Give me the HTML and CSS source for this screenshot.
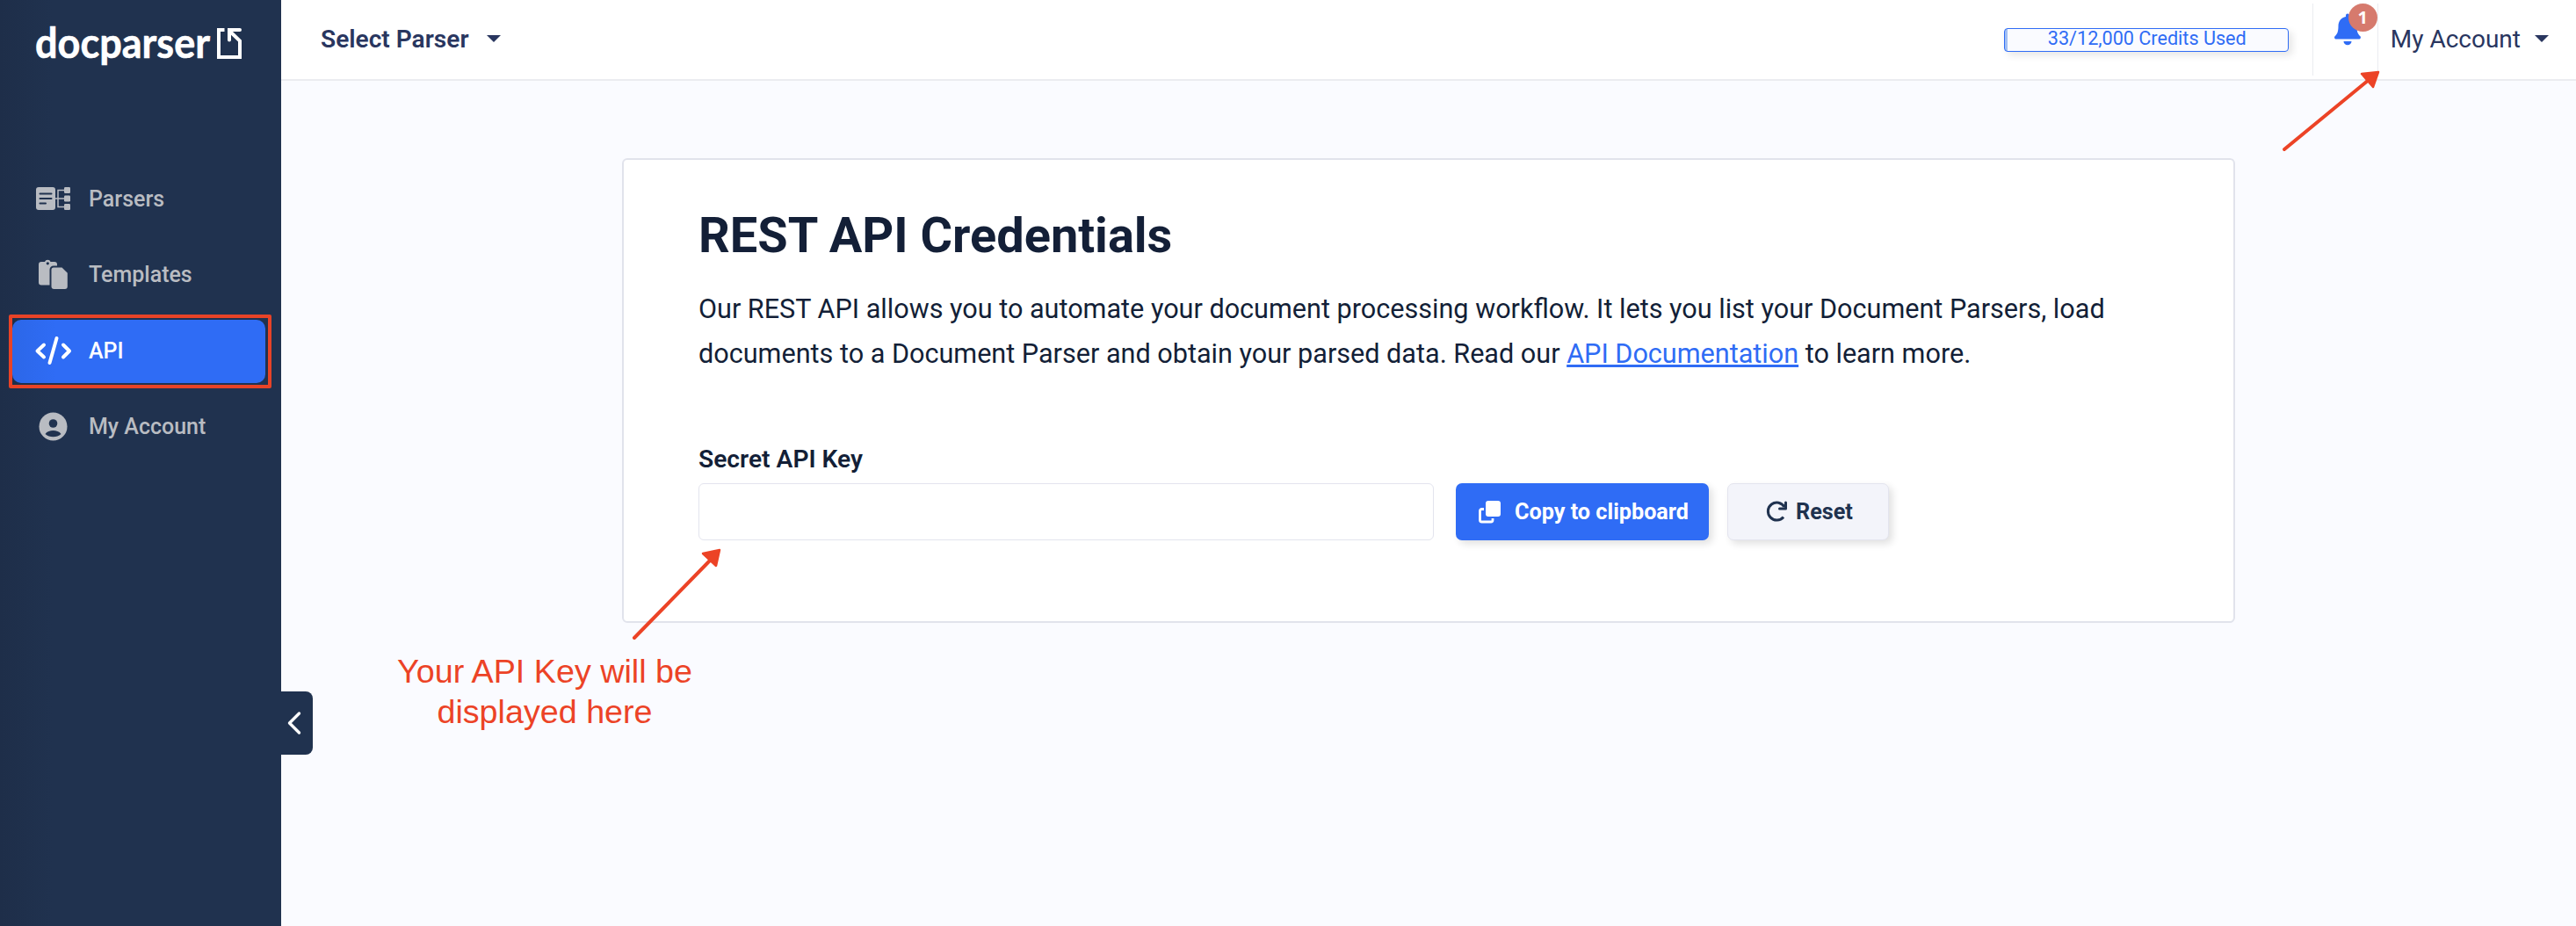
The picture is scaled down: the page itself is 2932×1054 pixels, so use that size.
FILE: index.html
```html
<!DOCTYPE html>
<html lang="en">
<head>
  <meta charset="UTF-8">
  <title>REST API Credentials - Docparser</title>
  <link rel="stylesheet" href="styles.css">
</head>
<body>

<aside class="sidebar">
  <a class="logo" href="#">
    <svg width="240" height="66" viewBox="0 0 240 66">
      <text class="wordmark" x="0" y="45" textLength="199" lengthAdjust="spacingAndGlyphs">docparser</text>
      <path d="M215.500 13H209v31h24V25.500L221 14" fill="none" stroke="#fff" stroke-width="4"/>
      <path d="M233 13h-12v11.500" fill="none" stroke="#fff" stroke-width="4" stroke-linecap="round"/>
    </svg>
  </a>

  <nav class="menu">
    <a class="menu-item" href="#">
      <svg width="40" height="40" viewBox="0 0 40 40">
        <rect x="1" y="6" width="22" height="26" rx="3" fill="currentColor"/>
        <path d="M5.500 13.500h13M5.500 19h13M5.500 24.500h6.500" stroke="#20324f" stroke-width="2" stroke-linecap="round"/>
        <path d="M23 19h11M34 9.500h-8v19h8" fill="none" stroke="currentColor" stroke-width="1.500"/>
        <rect x="33" y="6" width="7" height="7" rx="1.200" fill="currentColor"/>
        <rect x="33" y="15.500" width="7" height="7" rx="1.200" fill="currentColor"/>
        <rect x="33" y="25" width="7" height="7" rx="1.200" fill="currentColor"/>
      </svg>
      <span>Parsers</span>
    </a>
    <a class="menu-item" href="#">
      <svg width="40" height="40" viewBox="0 0 40 40">
        <path d="M7 5h4a3.500 3.500 0 0 1 6.600 0H22a3 3 0 0 1 3 3v1.500h-4a4.500 4.500 0 0 0-4.500 4.500v17.500H7a3 3 0 0 1-3-3V8a3 3 0 0 1 3-3z" fill="currentColor"/>
        <circle cx="14.300" cy="6.800" r="1.600" fill="#20324f"/>
        <path d="M21 11.500h9.500l6.300 6.300V33a3 3 0 0 1-3 3H21.500a3 3 0 0 1-3-3V14a2.500 2.500 0 0 1 2.500-2.500z" fill="currentColor"/>
      </svg>
      <span>Templates</span>
    </a>
    <a class="menu-item active" href="#">
      <svg width="40" height="40" viewBox="0 0 40 40">
        <path d="M10 12.500L2.500 19.500l7.500 7M32 12.500l7 7-7 7M24.500 5l-8 28" fill="none" stroke="currentColor" stroke-width="4" stroke-linecap="round" stroke-linejoin="round"/>
      </svg>
      <span>API</span>
    </a>
    <a class="menu-item" href="#">
      <svg width="40" height="40" viewBox="0 0 40 40">
        <circle cx="20.500" cy="19.500" r="16" fill="currentColor"/>
        <circle cx="20.500" cy="16" r="4.800" fill="#20324f"/>
        <path d="M11.500 28c2-3 5.500-4 9-4s7 1 9 4c-2.500 2.300-5.500 3.300-9 3.300s-6.500-1-9-3.300z" fill="#20324f"/>
      </svg>
      <span>My Account</span>
    </a>
  </nav>

  <button class="toggle">
    <svg width="16" height="26" viewBox="0 0 16 26">
      <path d="M13.500 2L2.500 13l11 11" fill="none" stroke="#fff" stroke-width="3.400" stroke-linecap="round" stroke-linejoin="round"/>
    </svg>
  </button>
</aside>

<div class="page">
  <header class="topbar">
    <a class="select-parser" href="#"><span>Select Parser</span> <i class="caret"></i></a>
    <div class="credits">33/12,000 Credits Used</div>
    <a class="bell" href="#">
      <svg width="30" height="36" viewBox="0 0 30 36">
        <path d="M13 3V1.500a2 2 0 0 1 4 0V3c5 1 8.500 5 8.500 10.500 0 7 1.500 9.500 3.700 11.500 1.500 1.500.6 3.500-1.200 3.500H2C.2 28.500-.7 26.500.8 25c2.200-2 3.700-4.500 3.700-11.500C4.500 8 8 4 13 3z" fill="#2f6cf5"/>
        <path d="M10.500 31h9c0 2.600-2 4.300-4.500 4.300s-4.500-1.700-4.500-4.300z" fill="#2f6cf5"/>
      </svg>
      <span class="badge">1</span>
    </a>
    <a class="account" href="#"><span>My Account</span> <i class="caret"></i></a>
  </header>

  <main class="card">
    <h1>REST API Credentials</h1>
    <p>Our REST API allows you to automate your document processing workflow. It lets you list your Document Parsers, load<br>documents to a Document Parser and obtain your parsed data. Read our <a href="#">API Documentation</a> to learn more.</p>
    <label for="apiKey">Secret API Key</label>
    <div class="key-row">
      <input type="text" id="apiKey">
      <button class="btn copy-btn">
        <svg width="25" height="26" viewBox="0 0 25 26">
          <rect x="8" y="0" width="17" height="18" rx="3" fill="#fff"/>
          <path d="M6 9.500H3.500a2 2 0 0 0-2 2V22a2 2 0 0 0 2 2H14a2 2 0 0 0 2-2v-2" fill="none" stroke="#fff" stroke-width="2.800"/>
        </svg>
        <span>Copy to clipboard</span>
      </button>
      <button class="btn reset-btn">
        <svg width="24" height="24" viewBox="0 0 24 24">
          <path d="M19 18.500A10 10 0 1 1 20 7" fill="none" stroke="#20324f" stroke-width="3"/>
          <path d="M21.500 2v7h-7" fill="none" stroke="#20324f" stroke-width="3" stroke-linecap="round" stroke-linejoin="round"/>
        </svg>
        <span>Reset</span>
      </button>
    </div>
  </main>
</div>

<!-- Help annotations -->
<div class="note-box"></div>
<div class="note-text">Your API Key will be<br>displayed here</div>
<svg class="note-arrow arrow-key" width="110" height="112" viewBox="0 0 110 112">
  <path d="M6 107L92 19" stroke="#ec4326" stroke-width="4" stroke-linecap="round"/>
  <path d="M103 7l-19 4 15 14z" fill="#ec4326" stroke="#ec4326" stroke-width="2.500" stroke-linejoin="round"/>
</svg>
<svg class="note-arrow arrow-account" width="120" height="102" viewBox="0 0 120 102">
  <path d="M6 96L102 17" stroke="#ec4326" stroke-width="4" stroke-linecap="round"/>
  <path d="M113 8l-19 2 13 15z" fill="#ec4326" stroke="#ec4326" stroke-width="2.500" stroke-linejoin="round"/>
</svg>
</body>
</html>
```
FILE: styles.css
```css
* {
  box-sizing: border-box;
}
body {
  margin: 0;
  display: flex;
  height: 1054px;
  font-family: Roboto, sans-serif;
  background: #fafbff;
  color: #131f37;
  overflow: hidden;
}
a {
  text-decoration: none;
  color: inherit;
}
svg {
  display: block;
  flex: none;
  overflow: visible;
}
.sidebar {
  position: relative;
  width: 320px;
  flex: none;
  background: linear-gradient(to right, #1e2e49, #20324f 60px);
}
.logo {
  display: block;
  height: 87px;
  padding: 21px 0 0 40px;
}
.wordmark {
  font-family: Lato, sans-serif;
  font-size: 47px;
  font-weight: 700;
  fill: #fff;
  stroke: #fff;
  stroke-width: 0.6px;
}
.menu {
  display: flex;
  flex-direction: column;
  gap: 14.400px;
  padding: 104px 18px 0 14px;
}
.menu-item {
  display: flex;
  align-items: center;
  gap: 21px;
  height: 72px;
  padding-left: 26px;
  border-radius: 10px;
  font-size: 25px;
  font-weight: 500;
  color: #b9bcc2;
}
.menu-item span {
  margin-bottom: 1px;
}
.menu-item.active {
  background: linear-gradient(to right, #2c67e8, #2f6cf5 50px);
  color: #fff;
}
.toggle {
  position: absolute;
  left: 320px;
  top: 787px;
  width: 36px;
  height: 72px;
  padding: 0 0 0 7px;
  border: none;
  border-radius: 0 8px 8px 0;
  background: #20324f;
}
.page {
  flex: 1;
}
.topbar {
  display: flex;
  align-items: center;
  height: 92px;
  padding: 0 31px 0 45px;
  background: #fff;
  border-bottom: 2px solid #ebecf0;
  font-size: 28px;
  color: #29365f;
}
.topbar span {
  margin-bottom: 2px;
}
.select-parser {
  display: flex;
  align-items: center;
  gap: 20px;
  font-size: 28.100px;
  font-weight: 600;
  margin-right: auto;
}
.caret {
  margin-bottom: 3px;
  border: 8px solid transparent;
  border-top-color: #29365f;
  border-bottom: none;
}
.credits {
  width: 324px;
  height: 27px;
  margin-right: 27px;
  border: 1px solid #2f6cf5;
  border-radius: 4px;
  background: linear-gradient(to right, #a3c0f3 3px, #fafbff 3px);
  box-shadow: 4px 4px 8px rgba(0,0,0,0.1);
  color: #2f6cf5;
  font-size: 21.600px;
  line-height: 22px;
  text-align: center;
  text-indent: 2px;
}
.bell {
  position: relative;
  width: 75px;
  height: 82px;
  padding: 12px 0 0 24px;
  border-left: 1px solid #ebecf0;
  border-right: 1px solid #ebecf0;
}
.badge {
  position: absolute;
  left: 40px;
  top: 0;
  width: 33px;
  height: 32px;
  border-radius: 50%;
  background: #d67a6d;
  color: #fff;
  font: bold 20px/32px "Open Sans", sans-serif;
  text-align: center;
}
.account {
  display: flex;
  align-items: center;
  gap: 16px;
  padding-left: 14px;
}
.card {
  width: 1836px;
  height: 529px;
  margin: 88px 0 0 388px;
  padding: 46px 85px;
  background: #fff;
  border: 2px solid #e1e3ec;
  border-radius: 6px;
}
h1 {
  margin: 0;
  font-size: 55.900px;
  line-height: 80px;
  font-weight: 700;
}
p {
  margin: 18px 0 77px;
  font-size: 30.600px;
  line-height: 51px;
  white-space: nowrap;
}
p a {
  color: #2f6cf5;
  text-decoration: underline;
}
label {
  display: block;
  height: 45px;
  font-size: 28.200px;
  line-height: 36px;
  font-weight: 600;
}
.key-row {
  display: flex;
}
#apiKey {
  width: 837px;
  height: 65px;
  border: 1px solid #e3e4ee;
  border-radius: 6px;
}
.btn {
  display: flex;
  align-items: center;
  height: 65px;
  border: none;
  border-radius: 7px;
  font-family: inherit;
  font-size: 25.200px;
  font-weight: 700;
  box-shadow: 4px 4px 8px rgba(0,0,0,0.12);
}
.copy-btn {
  width: 288px;
  margin-left: 25px;
  padding: 0 0 0 26px;
  gap: 16px;
  background: #2f6cf5;
  color: #fff;
}
.reset-btn {
  width: 184px;
  margin-left: 21px;
  padding: 0 0 0 44px;
  gap: 9px;
  background: #f3f4fa;
  border: 1px solid #e3e4ee;
  color: #20324f;
}
.reset-btn svg {
  margin-bottom: 2px;
}
.note-box {
  position: absolute;
  left: 10px;
  top: 358px;
  width: 299px;
  height: 84px;
  border: 4px solid #e84327;
  border-radius: 2px;
}
.note-text {
  position: absolute;
  left: 420px;
  top: 741px;
  width: 400px;
  font: 37.700px/46px "Liberation Sans", Arial, sans-serif;
  color: #ec4326;
  text-align: center;
}
.note-arrow {
  position: absolute;
}
.arrow-key {
  left: 716px;
  top: 619px;
}
.arrow-account {
  left: 2594px;
  top: 74px;
}
```
